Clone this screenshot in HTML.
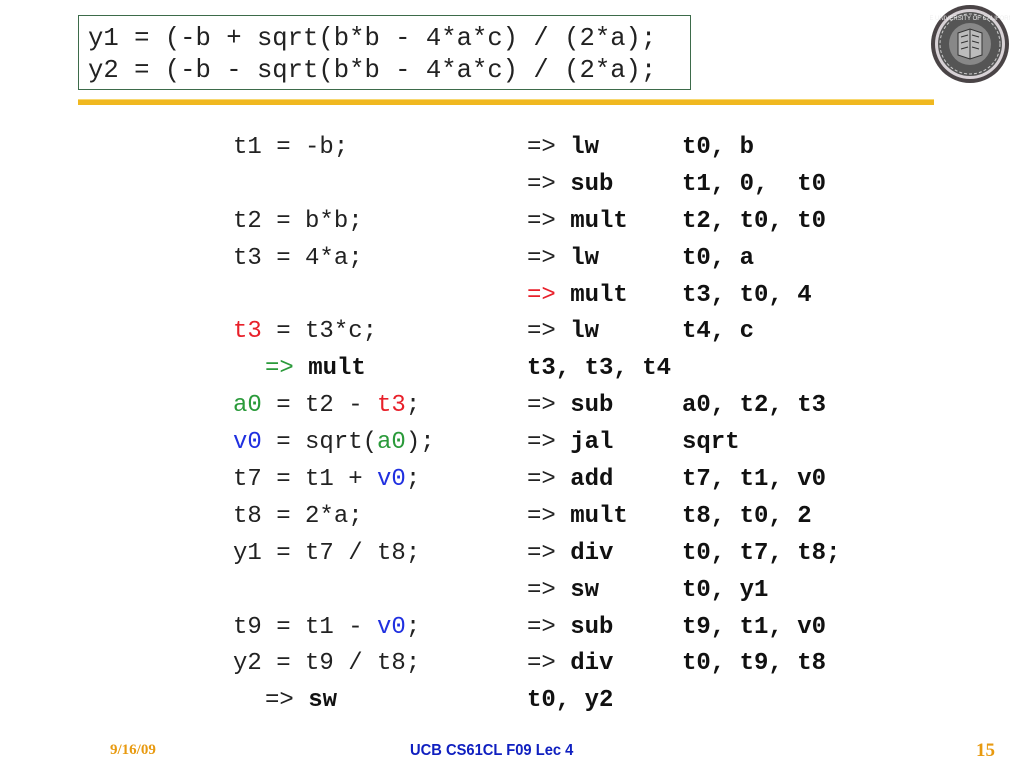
<!DOCTYPE html>
<html><head><meta charset="utf-8"><style>
html,body{margin:0;padding:0;background:#fff;}
body{width:1024px;height:768px;position:relative;overflow:hidden;font-family:"Liberation Mono",monospace;}
.box{position:absolute;left:78px;top:15px;width:613px;height:75px;border:1.5px solid #3d6b4a;box-sizing:border-box;}
.h{position:absolute;left:88px;font-size:25.6px;color:#222;white-space:pre;line-height:30px;}
.gold{position:absolute;left:78px;top:99px;width:856px;height:5px;background:#f0b820;border-top:1px solid #f8d870;}
.c{position:absolute;font-size:24px;line-height:30px;white-space:pre;color:#222;}
b{font-weight:bold;color:#111;}
.r{color:#e8202a}.g{color:#2a9a3a}.bl{color:#2030e0}
.f{position:absolute;top:743px;font-family:"Liberation Sans",sans-serif;font-size:14px;}
</style></head><body>
<div class="box"></div>
<div class="h" style="top:24px">y1 = (-b + sqrt(b*b - 4*a*c) / (2*a);</div>
<div class="h" style="top:56px">y2 = (-b - sqrt(b*b - 4*a*c) / (2*a);</div>
<svg style="position:absolute;left:930px;top:3px" width="80" height="82" viewBox="0 0 80 82">
<circle cx="40" cy="41" r="39" fill="#4a4446"/>
<circle cx="40" cy="41" r="35" fill="#d8d2d6"/>
<circle cx="40" cy="41" r="32" fill="#555"/>
<circle cx="40" cy="41" r="30" fill="none" stroke="#ccc" stroke-width="1" stroke-dasharray="3 2"/>
<circle cx="40" cy="41" r="21" fill="#888"/>
<path d="M28 30 L40 26 L52 30 L52 52 L40 56 L28 52 Z" fill="#bbb" stroke="#333"/>
<path d="M40 26 V56 M31 34 L38 32 M31 40 L38 38 M31 46 L38 44 M42 32 L49 34 M42 38 L49 40 M42 44 L49 46" stroke="#333"/>
<text x="40" y="17" font-size="6" fill="#eee" text-anchor="middle" font-family="Liberation Sans">THE UNIVERSITY OF CALIFORNIA</text>
</svg>
<div class="gold"></div>

<div class="c" style="left:233px;top:133px">t1 = -b;</div>
<div class="c" style="left:527px;top:133px">=> <b>lw</b></div><div class="c" style="left:682px;top:133px"><b>t0, b</b></div>

<div class="c" style="left:527px;top:170px">=> <b>sub</b></div><div class="c" style="left:682px;top:170px"><b>t1, 0,  t0</b></div>

<div class="c" style="left:233px;top:207px">t2 = b*b;</div>
<div class="c" style="left:527px;top:207px">=> <b>mult</b></div><div class="c" style="left:682px;top:207px"><b>t2, t0, t0</b></div>

<div class="c" style="left:233px;top:244px">t3 = 4*a;</div>
<div class="c" style="left:527px;top:244px">=> <b>lw</b></div><div class="c" style="left:682px;top:244px"><b>t0, a</b></div>

<div class="c" style="left:527px;top:281px"><span class="r">=></span> <b>mult</b></div><div class="c" style="left:682px;top:281px"><b>t3, t0, 4</b></div>

<div class="c" style="left:233px;top:317px"><span class="r">t3</span> = t3*c;</div>
<div class="c" style="left:527px;top:317px">=> <b>lw</b></div><div class="c" style="left:682px;top:317px"><b>t4, c</b></div>

<div class="c" style="left:265px;top:354px"><span class="g">=></span> <b>mult</b></div><div class="c" style="left:527px;top:354px"><b>t3, t3, t4</b></div>

<div class="c" style="left:233px;top:391px"><span class="g">a0</span> = t2 - <span class="r">t3</span>;</div>
<div class="c" style="left:527px;top:391px">=> <b>sub</b></div><div class="c" style="left:682px;top:391px"><b>a0, t2, t3</b></div>

<div class="c" style="left:233px;top:428px"><span class="bl">v0</span> = sqrt(<span class="g">a0</span>);</div>
<div class="c" style="left:527px;top:428px">=> <b>jal</b></div><div class="c" style="left:682px;top:428px"><b>sqrt</b></div>

<div class="c" style="left:233px;top:465px">t7 = t1 + <span class="bl">v0</span>;</div>
<div class="c" style="left:527px;top:465px">=> <b>add</b></div><div class="c" style="left:682px;top:465px"><b>t7, t1, v0</b></div>

<div class="c" style="left:233px;top:502px">t8 = 2*a;</div>
<div class="c" style="left:527px;top:502px">=> <b>mult</b></div><div class="c" style="left:682px;top:502px"><b>t8, t0, 2</b></div>

<div class="c" style="left:233px;top:539px">y1 = t7 / t8;</div>
<div class="c" style="left:527px;top:539px">=> <b>div</b></div><div class="c" style="left:682px;top:539px"><b>t0, t7, t8;</b></div>

<div class="c" style="left:527px;top:576px">=> <b>sw</b></div><div class="c" style="left:682px;top:576px"><b>t0, y1</b></div>

<div class="c" style="left:233px;top:613px">t9 = t1 - <span class="bl">v0</span>;</div>
<div class="c" style="left:527px;top:613px">=> <b>sub</b></div><div class="c" style="left:682px;top:613px"><b>t9, t1, v0</b></div>

<div class="c" style="left:233px;top:649px">y2 = t9 / t8;</div>
<div class="c" style="left:527px;top:649px">=> <b>div</b></div><div class="c" style="left:682px;top:649px"><b>t0, t9, t8</b></div>

<div class="c" style="left:265px;top:686px">=> <b>sw</b></div><div class="c" style="left:527px;top:686px"><b>t0, y2</b></div>

<div class="f" style="left:110px;color:#e89a10;font-family:'Liberation Serif',serif;font-weight:bold;font-size:15px;top:742px">9/16/09</div>
<div class="f" style="left:410px;color:#1020c0;font-weight:bold;font-size:16px;transform:scaleX(0.92);transform-origin:left;top:742px">UCB CS61CL F09 Lec 4</div>
<div class="f" style="left:976px;color:#e89a10;font-family:'Liberation Serif',serif;font-weight:bold;font-size:19px;top:740px">15</div>
</body></html>
